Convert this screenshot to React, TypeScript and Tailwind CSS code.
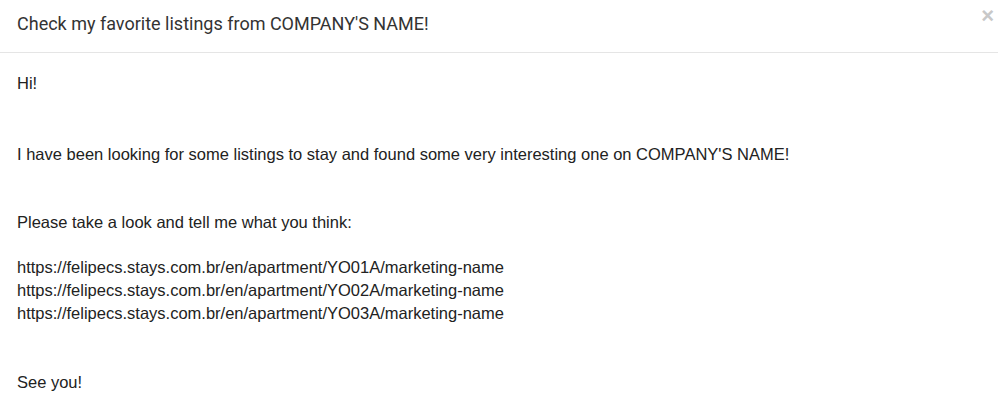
export default function App() {
  const links = [
    'https://felipecs.stays.com.br/en/apartment/YO01A/marketing-name',
    'https://felipecs.stays.com.br/en/apartment/YO02A/marketing-name',
    'https://felipecs.stays.com.br/en/apartment/YO03A/marketing-name',
  ]

  return (
    <div className="w-[998px] h-[407px] bg-white overflow-hidden">
      {/* Header */}
      <div className="relative h-[53px] border-b border-[#e5e5e5] pl-[17px] flex items-center">
        <h4 className="text-[18px] text-[#333] font-['Roboto',sans-serif] -mt-[6px]">
          Check my favorite listings from COMPANY'S NAME!
        </h4>
        <button className="absolute right-[4px] top-[5px] text-[#c8c8c8] text-[22px] font-bold leading-none font-['Liberation_Sans',sans-serif]">
          ×
        </button>
      </div>

      {/* Body */}
      <div className="pl-[17px] pt-[19px] text-[16.5px] leading-[23px] text-[#222] font-['Liberation_Sans',Arial,sans-serif]">
        <p>Hi!</p>
        <p className="mt-[48px]">
          I have been looking for some listings to stay and found some very interesting one on COMPANY'S NAME!
        </p>
        <p className="mt-[45px]">Please take a look and tell me what you think:</p>
        <div className="mt-[22px]">
          {links.map((l) => (
            <p key={l}>{l}</p>
          ))}
        </div>
        <p className="mt-[46px]">See you!</p>
      </div>
    </div>
  )
}
